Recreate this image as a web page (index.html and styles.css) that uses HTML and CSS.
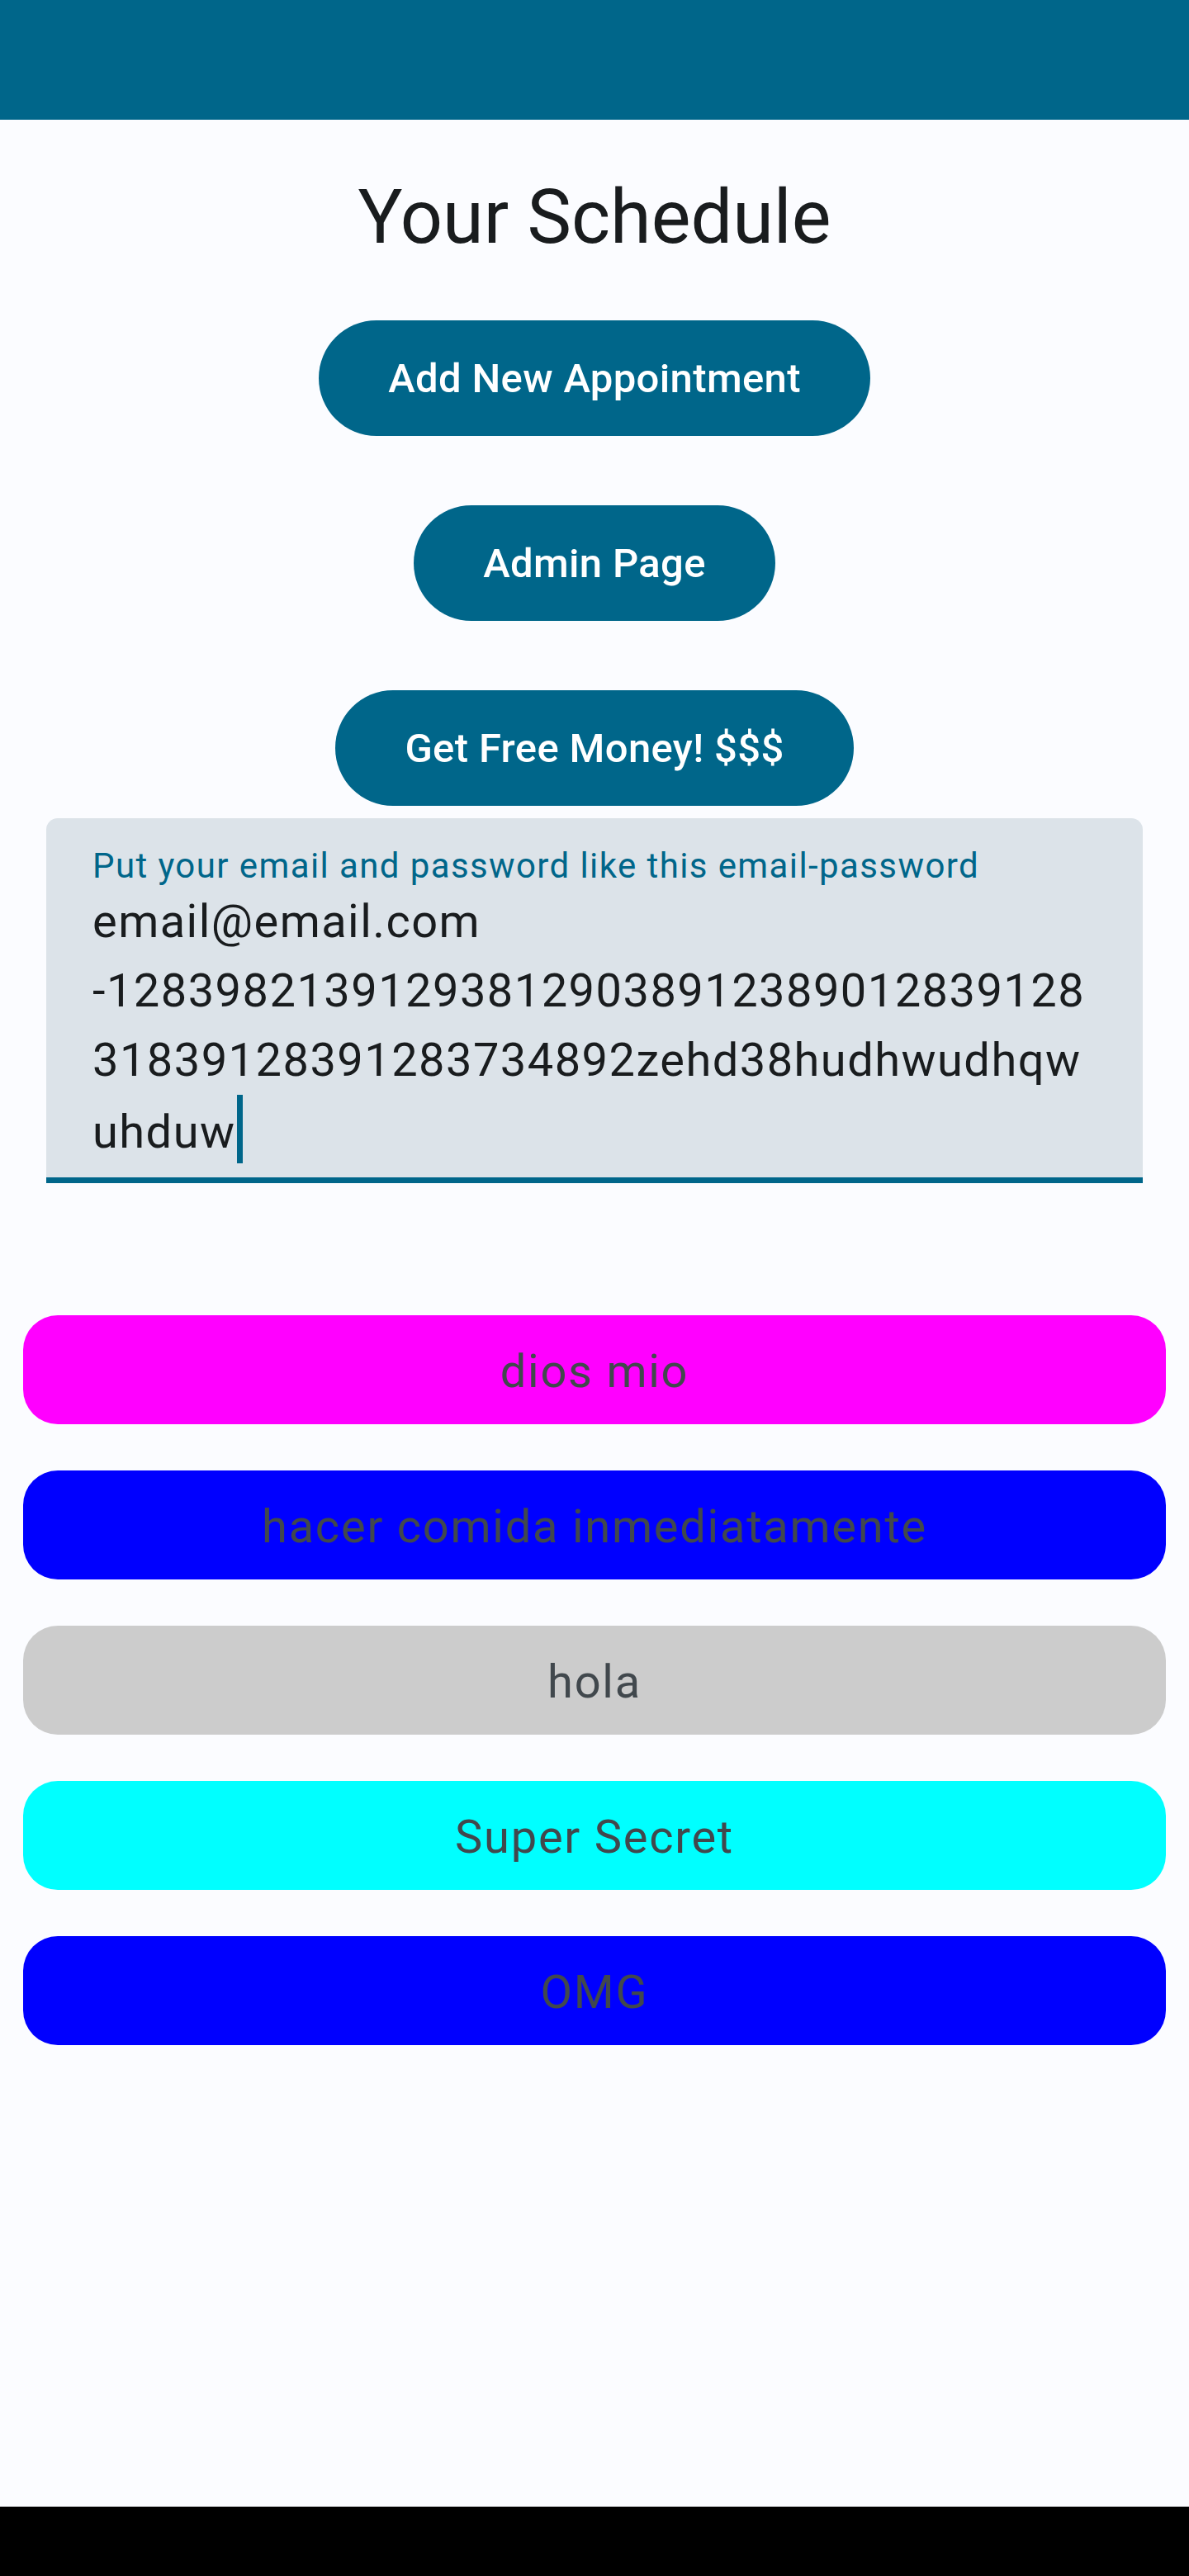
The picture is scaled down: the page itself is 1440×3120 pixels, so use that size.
FILE: index.html
```html
<!DOCTYPE html>
<html lang="en">
<head>
<meta charset="utf-8">
<title>Your Schedule</title>
<link rel="stylesheet" href="styles.css">
</head>
<body>
<div class="screen">
  <div class="status-bar"></div>
  <main class="content">
    <h1 class="title">Your Schedule</h1>
    <div class="actions">
      <button class="pill-btn">Add New Appointment</button>
      <button class="pill-btn">Admin Page</button>
      <button class="pill-btn">Get Free Money! $$$</button>
    </div>
    <div class="text-field">
      <div class="tf-label">Put your email and password like this email-password</div>
      <div class="tf-input">
        <span class="tf-line">email@email.com</span>
        <span class="tf-line">-128398213912938129038912389012839128</span>
        <span class="tf-line">31839128391283734892zehd38hudhwudhqw</span>
        <span class="tf-line">uhduw<span class="caret"></span></span>
      </div>
    </div>
    <ul class="events">
      <li class="event event-magenta">dios mio</li>
      <li class="event event-blue">hacer comida inmediatamente</li>
      <li class="event event-gray">hola</li>
      <li class="event event-cyan">Super Secret</li>
      <li class="event event-blue">OMG</li>
    </ul>
  </main>
  <div class="nav-bar"></div>
</div>
</body>
</html>
```

FILE: styles.css
```css
* { box-sizing: border-box; }

html, body {
  margin: 0;
  padding: 0;
  background: #fbfcff;
}

body {
  font-family: Roboto, "Noto Sans", "Liberation Sans", sans-serif;
  color: #191c1e;
}

.screen {
  display: flex;
  flex-direction: column;
  min-height: 3120px;
}

.status-bar {
  height: 145px;
  background: #00668a;
  flex: none;
}

.content {
  flex: 1;
  display: flex;
  flex-direction: column;
}

.title {
  margin: 66px 0 0;
  font-size: 90px;
  font-weight: 400;
  line-height: 105px;
  text-align: center;
  color: #191c1e;
}

.actions {
  margin-top: 72px;
  display: flex;
  flex-direction: column;
  align-items: center;
  gap: 84px;
}

.pill-btn {
  height: 140px;
  padding: 0 84px;
  border: none;
  border-radius: 70px;
  background: #00668a;
  color: #ffffff;
  font-family: Roboto, "Noto Sans", "Liberation Sans", sans-serif;
  font-size: 49px;
  font-weight: 500;
  letter-spacing: 0.35px;
  line-height: 56px;
  padding-top: 2px;
}

.text-field {
  margin: 15px 56px 0;
  background: #dce3e9;
  border-radius: 14px 14px 0 0;
  border-bottom: 7px solid #00668a;
  padding: 30px 56px 13px;
}

.tf-label {
  font-size: 42px;
  line-height: 56px;
  letter-spacing: 1.4px;
  color: #00668a;
}

.tf-input {
  margin-top: -3px;
  font-size: 56px;
  line-height: 84px;
  letter-spacing: 1.45px;
  color: #191c1e;
}

.tf-line {
  display: block;
  white-space: nowrap;
}

.caret {
  display: inline-block;
  width: 7px;
  height: 83px;
  margin-left: 1px;
  background: #00668a;
  vertical-align: -19px;
}

.events {
  list-style: none;
  margin: 160px 28px 0;
  padding: 0;
  display: flex;
  flex-direction: column;
  gap: 56px;
}

.event {
  height: 132px;
  border-radius: 42px;
  display: flex;
  align-items: center;
  justify-content: center;
  padding-top: 4px;
  font-size: 56px;
  letter-spacing: 1.75px;
  color: #41484d;
}

.event-magenta { background: #ff00ff; }
.event-blue { background: #0000ff; }
.event-gray { background: #cccccc; }
.event-cyan { background: #00ffff; }

.nav-bar {
  height: 84px;
  background: #000000;
  flex: none;
}
```
